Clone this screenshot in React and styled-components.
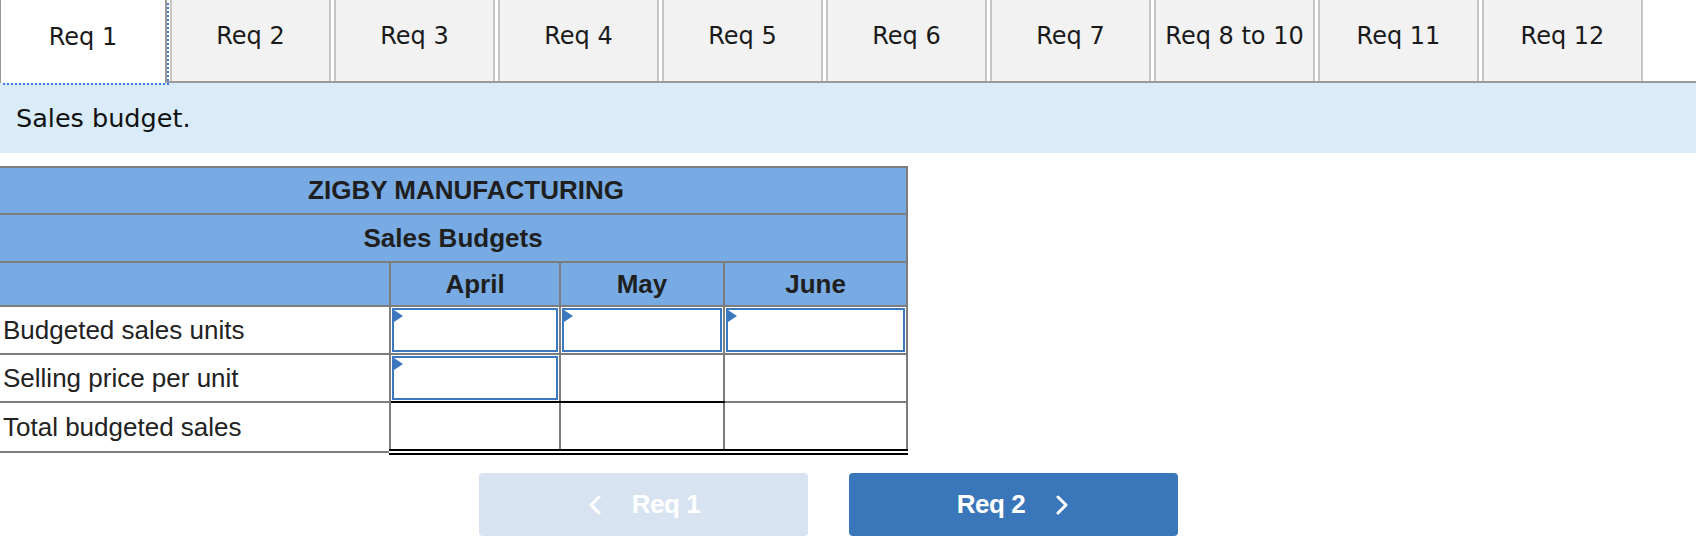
import React from "react";
import styled, { createGlobalStyle } from "styled-components";

const GlobalStyle = createGlobalStyle`
  body {
    margin: 0;
    background: #fff;
  }
`;

const tabs = [
  "Req 1",
  "Req 2",
  "Req 3",
  "Req 4",
  "Req 5",
  "Req 6",
  "Req 7",
  "Req 8 to 10",
  "Req 11",
  "Req 12",
];

const rows = [
  { label: "Budgeted sales units", inputs: [true, true, true] },
  { label: "Selling price per unit", inputs: [true, false, false], rule: [true, true, false] },
  { label: "Total budgeted sales", inputs: [false, false, false], total: true },
];

export default function App() {
  return (
    <Page>
      <GlobalStyle />
      <TabBar>
        {tabs.map((t, i) => (
          <Tab key={t} $active={i === 0}>
            {t}
          </Tab>
        ))}
      </TabBar>
      <Band>Sales budget.</Band>

      <Sheet>
        <colgroup>
          <col style={{ width: 390 }} />
          <col style={{ width: 170 }} />
          <col style={{ width: 164 }} />
          <col style={{ width: 183 }} />
        </colgroup>
        <tbody>
          <tr>
            <HeadCell colSpan={4} $h={47} $shift={26}>
              ZIGBY MANUFACTURING
            </HeadCell>
          </tr>
          <tr>
            <HeadCell colSpan={4} $h={48}>
              Sales Budgets
            </HeadCell>
          </tr>
          <tr>
            <HeadCell $h={44}></HeadCell>
            <HeadCell $h={44}>April</HeadCell>
            <HeadCell $h={44}>May</HeadCell>
            <HeadCell $h={44}>June</HeadCell>
          </tr>
          {rows.map((r) => (
            <tr key={r.label}>
              <LabelCell>{r.label}</LabelCell>
              {r.inputs.map((hasInput, j) => (
                <ValueCell
                  key={j}
                  $rule={r.rule ? r.rule[j] : false}
                  $total={r.total}
                >
                  {hasInput && (
                    <Entry>
                      <Marker />
                      <EntryInput type="text" aria-label={r.label} />
                    </Entry>
                  )}
                </ValueCell>
              ))}
            </tr>
          ))}
        </tbody>
      </Sheet>

      <Nav>
        <NavButton $disabled>
          <Chevron dir="left" />
          <span>Req 1</span>
        </NavButton>
        <NavButton>
          <span>Req 2</span>
          <Chevron dir="right" />
        </NavButton>
      </Nav>
    </Page>
  );
}

function Chevron({ dir }) {
  const pts = dir === "left" ? "12,2 4,10 12,18" : "3,2 11,10 3,18";
  return (
    <svg width="15" height="20" viewBox="0 0 15 20">
      <polyline
        points={pts}
        fill="none"
        stroke="#fff"
        strokeWidth="3"
        strokeLinecap="round"
        strokeLinejoin="round"
      />
    </svg>
  );
}

const Page = styled.div`
  width: 1696px;
`;

const TabBar = styled.div`
  display: flex;
  height: 81px;
  border-bottom: 2px solid #9a9a9a;
`;

const Tab = styled.button`
  box-sizing: border-box;
  width: ${({ $active }) => ($active ? "167px" : "161px")};
  height: ${({ $active }) => ($active ? "83px" : "81px")};
  margin: 0 0 ${({ $active }) => ($active ? "-2px" : "0")}
    ${({ $active }) => ($active ? "0" : "3px")};
  padding: 0 0 9px;
  background: ${({ $active }) => ($active ? "#fff" : "#f2f2f2")};
  border: 2px solid #c6c6c6;
  border-top: none;
  border-bottom: none;
  ${({ $active }) =>
    $active &&
    `
    border-left: 1px solid #999;
    border-right: 2px solid #999;
    outline: 2px dotted #3b7dd8;
    position: relative;
    z-index: 1;
  `}
  font-family: "DejaVu Sans", Verdana, sans-serif;
  font-size: 24px;
  color: #1a1a1a;
  display: flex;
  align-items: center;
  justify-content: center;
  white-space: nowrap;
  cursor: pointer;
`;

const Band = styled.div`
  height: 70px;
  background: #daebf9;
  padding-left: 16px;
  display: flex;
  align-items: center;
  font-family: "DejaVu Sans", Verdana, sans-serif;
  font-size: 25.5px;
  color: #111;
`;

const Sheet = styled.table`
  margin-top: 13px;
  width: 907px;
  border-collapse: collapse;
  table-layout: fixed;
  font-family: "Liberation Sans", Arial, sans-serif;
  font-size: 26px;
  color: #222;

  td:first-child {
    border-left: none;
  }
`;

const HeadCell = styled.td`
  height: ${({ $h }) => $h - 2}px;
  padding: 0 0 0 ${({ $shift }) => ($shift ? `${$shift}px` : "0")};
  background: #78abe3;
  border: 2px solid #7d7d7d;
  text-align: center;
  font-weight: 700;
  color: #1f1f1f;
`;

const LabelCell = styled.td`
  height: 46px;
  padding: 0 0 0 3px;
  border: 2px solid #7d7d7d;
  white-space: nowrap;
`;

const ValueCell = styled.td`
  height: 46px;
  padding: 0;
  border: 2px solid #7d7d7d;
  ${({ $rule }) => $rule && "border-bottom: 2px solid #000;"}
  ${({ $total }) => $total && "border-bottom: 6px double #000;"}
`;

const Entry = styled.div`
  position: relative;
  height: 44px;
  margin: 1px;
`;

const Marker = styled.span`
  position: absolute;
  left: 2px;
  top: 2px;
  width: 0;
  height: 0;
  border-top: 6px solid transparent;
  border-bottom: 6px solid transparent;
  border-left: 9px solid #3b78c0;
`;

const EntryInput = styled.input`
  box-sizing: border-box;
  width: 100%;
  height: 100%;
  margin: 0;
  padding: 0 8px;
  border: 2px solid #3b78c0;
  background: #fff;
  font-family: "Liberation Sans", Arial, sans-serif;
  font-size: 22px;
  text-align: right;
  outline: none;
`;

const Nav = styled.div`
  display: flex;
  gap: 41px;
  margin: 18px 0 0 479px;
`;

const NavButton = styled.button`
  width: 329px;
  height: 63px;
  border: none;
  border-radius: 4px;
  background: ${({ $disabled }) => ($disabled ? "#d8e3f1" : "#3a76ba")};
  color: #fff;
  display: flex;
  align-items: center;
  justify-content: center;
  gap: 30px;
  font-family: "Liberation Sans", Arial, sans-serif;
  font-weight: 700;
  font-size: 26px;
  letter-spacing: -0.5px;
  cursor: ${({ $disabled }) => ($disabled ? "default" : "pointer")};
`;
